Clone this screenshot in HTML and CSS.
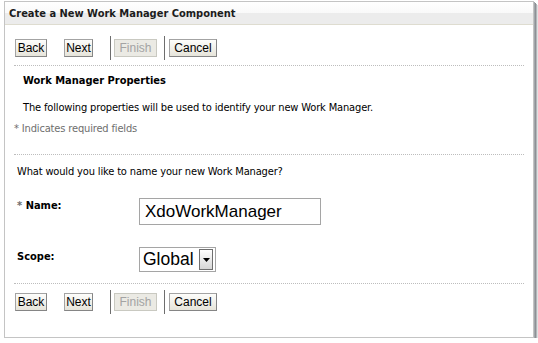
FILE: index.html
```html
<!DOCTYPE html>
<html lang="en">
<head>
    <meta charset="UTF-8">
    <title>Create a New Work Manager Component</title>
    <link rel="stylesheet" href="styles.css">
</head>
<body>
    <div class="panel">
        <div class="panel-head">Create a New Work Manager Component</div>

        <div class="btn-bar top-bar">
            <button class="btn btn-back">Back</button>
            <button class="btn btn-next">Next</button>
            <span class="sep"></span>
            <button class="btn btn-finish" disabled>Finish</button>
            <span class="sep sep-2"></span>
            <button class="btn btn-cancel">Cancel</button>
        </div>

        <div class="section">
            <h2>Work Manager Properties</h2>
            <p class="intro">The following properties will be used to identify your new Work Manager.</p>
            <p class="req"><span class="star">*</span> Indicates required fields</p>
        </div>

        <div class="form">
            <p class="question">What would you like to name your new Work Manager?</p>
            <div class="row name-row">
                <label class="lbl"><span class="star">*</span> Name:</label>
                <div class="field">XdoWorkManager</div>
            </div>
            <div class="row scope-row">
                <label class="lbl">Scope:</label>
                <div class="select">
                    <span class="select-text">Global</span>
                    <span class="select-btn">
                        <svg width="7" height="4" viewBox="0 0 7 4"><path d="M0 0h7L3.5 4z" fill="#000"/></svg>
                    </span>
                </div>
            </div>
        </div>

        <div class="btn-bar bottom-bar">
            <button class="btn btn-back">Back</button>
            <button class="btn btn-next">Next</button>
            <span class="sep"></span>
            <button class="btn btn-finish" disabled>Finish</button>
            <span class="sep sep-2"></span>
            <button class="btn btn-cancel">Cancel</button>
        </div>
    </div>
</body>
</html>
```

FILE: styles.css
```css
body {
    margin: 0;
    background: #fff;
    font-family: "DejaVu Sans Condensed", "Liberation Sans", sans-serif;
    font-size: 11px;
    color: #000;
}

.panel {
    margin: 1px 0 0 4px;
    width: 528px;
    height: 335px;
    border: 1px solid #c4c4c4;
    box-shadow: 1px 1px 0 #a3a7ab, 2px 2px 0 #8d9195, 3px 3px 0 #b4b7ba, 4px 4px 0 #dfe0e1;
}

.panel-head {
    height: 22px;
    line-height: 23px;
    padding-left: 4px;
    font-weight: bold;
    font-size: 11px;
    color: #1c1c1c;
    background: linear-gradient(#ffffff 0, #f9f9f9 50%, #ececec 52%, #ececec 100%);
    border-bottom: 1px solid #dedcd0;
}

.btn-bar {
    display: flex;
    align-items: center;
    margin: 0 9px;
}
.top-bar {
    padding: 11px 0 5px;
    border-bottom: 1px dotted #bdbdbd;
}
.bottom-bar {
    padding: 6px 0 5px;
    border-top: 1px dotted #bdbdbd;
}

.btn {
    box-sizing: border-box;
    font-family: "Liberation Sans", Arial, sans-serif;
    font-size: 12px;
    height: 18px;
    padding: 0;
    border: 1px solid #a3a3a3;
    border-right-color: #858585;
    border-bottom-color: #858585;
    background: linear-gradient(#fdfdfb, #e6e4da);
    color: #000;
    border-radius: 0;
}
.btn-back {
    width: 32px;
    margin: 0 17px 0 1px;
}
.btn-next {
    width: 29px;
    margin-right: 17px;
}
.btn-finish {
    width: 43px;
    margin-right: 7px;
}
.btn-cancel {
    width: 48px;
}
.btn[disabled] {
    color: #a3a3a3;
    background: #ebeae4;
    border-color: #c9c9c1;
}

.sep {
    width: 1px;
    height: 24px;
    background: #6e6e6e;
    margin-right: 3px;
}
.sep-2 {
    margin-right: 4px;
}

.section {
    box-sizing: border-box;
    height: 89px;
    padding: 8px 0 0 9px;
    margin: 0 9px;
    border-bottom: 1px dotted #bdbdbd;
}
.section h2 {
    margin: 0;
    font-size: 11px;
    font-weight: bold;
    line-height: 14px;
}
.intro {
    margin: 13px 0 0;
    line-height: 14px;
    letter-spacing: -0.15px;
}
.req {
    margin: 7px 0 0 -9px;
    line-height: 14px;
    color: #6e6e6e;
    letter-spacing: -0.15px;
}

.star {
    color: #6e6e6e;
}

.form {
    box-sizing: border-box;
    height: 128px;
    padding: 10px 0 0 3px;
    margin: 0 9px;
}
.question {
    margin: 0;
    line-height: 14px;
    letter-spacing: -0.15px;
}
.row {
    display: flex;
    align-items: flex-start;
}
.lbl {
    width: 122px;
    font-weight: bold;
    line-height: 14px;
}
.name-row {
    margin-top: 19px;
}
.name-row .lbl {
    margin-top: 1px;
}
.scope-row {
    margin-top: 22px;
}
.scope-row .lbl {
    margin-top: 3px;
}

.field {
    box-sizing: border-box;
    width: 182px;
    height: 27px;
    border: 1px solid #a5a5a5;
    font-family: "Liberation Sans", Arial, sans-serif;
    font-size: 17px;
    line-height: 25px;
    padding-left: 5px;
}

.select {
    box-sizing: border-box;
    display: flex;
    width: 77px;
    height: 25px;
    border: 1px solid #a5a5a5;
    font-family: "Liberation Sans", Arial, sans-serif;
    font-size: 17.5px;
}
.select-text {
    flex: 1;
    padding-left: 3px;
    line-height: 23px;
}
.select-btn {
    box-sizing: border-box;
    width: 14px;
    margin: 1px 2px 1px 0;
    border: 1px solid #6f6f6f;
    background: linear-gradient(#ffffff, #d6d6d6);
    display: flex;
    align-items: center;
    justify-content: center;
}
```
